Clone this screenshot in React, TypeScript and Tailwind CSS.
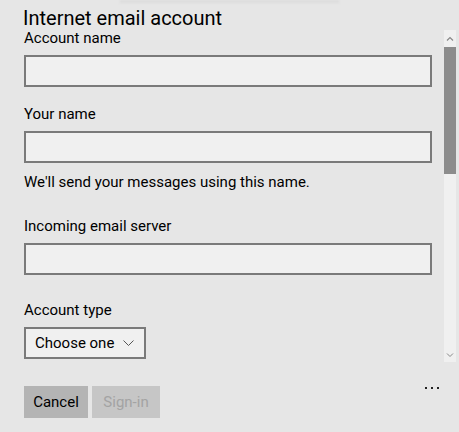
function Field({ label, hint, top }: { label: string; hint?: string; top: string }) {
  return (
    <div className={`flex flex-col ${top}`}>
      <label className="text-[15px] leading-[20px]">{label}</label>
      <div className="mt-[7px] h-[32px] w-[408px] border-2 border-[#7a7a7a] bg-[#f0f0f0]" />
      {hint && <p className="mt-[9px] text-[15px] leading-[20px]">{hint}</p>}
    </div>
  )
}

export default function App() {
  return (
    <div className="relative h-[432px] w-[459px] overflow-hidden bg-[#e6e6e6] text-black [font-family:Roboto,sans-serif]">
      <div className="mx-[120px] h-[3px] bg-[#dcdcdc] blur-[1px]" />
      <h1 className="pl-[23px] pt-[3px] text-[20px] leading-[24px]">Internet email account</h1>

      <div className="flex h-[334px] -mt-[2px]">
        <div className="flex w-[432px] flex-col pl-[24px]">
          <Field label="Account name" top="mt-0" />
          <Field label="Your name" hint="We'll send your messages using this name." top="mt-[17px]" />
          <Field label="Incoming email server" top="mt-[24px]" />

          <div className="mt-[25px] flex flex-col">
            <label className="text-[15px] leading-[20px]">Account type</label>
            <button className="mt-[7px] flex h-[32px] w-[122px] items-center justify-between border-2 border-[#7a7a7a] bg-[#f0f0f0] pl-[9px] pr-[10px] text-[15px]">
              <span>Choose one</span>
              <svg width="11" height="6" viewBox="0 0 11 6" fill="none" stroke="#555" strokeWidth="1">
                <path d="M0.5 0.5 L5.5 5.5 L10.5 0.5" />
              </svg>
            </button>
          </div>
        </div>

        <div className="ml-[12px] mt-[2px] flex w-[12px] flex-col bg-[#f0f0f0]">
          <div className="flex h-[17px] items-center justify-center">
            <svg width="8" height="5" viewBox="0 0 8 5" fill="none" stroke="#888" strokeWidth="1.2">
              <path d="M1 4.5 L4 1.5 L7 4.5" />
            </svg>
          </div>
          <div className="h-[127px] bg-[#8c8c8c]" />
          <div className="flex-1" />
          <div className="flex h-[14px] items-center justify-center">
            <svg width="8" height="5" viewBox="0 0 8 5" fill="none" stroke="#888" strokeWidth="1">
              <path d="M1 0.5 L4 3.5 L7 0.5" />
            </svg>
          </div>
        </div>
      </div>

      <div className="mt-[24px] flex items-start pl-[24px] pr-[20px]">
        <button className="h-[32px] w-[64px] bg-[#b4b4b4] text-[15px]">Cancel</button>
        <button className="ml-[4px] h-[32px] w-[68px] bg-[#c6c6c6] text-[15px] text-[#a3a3a3]">Sign-in</button>
        <div className="ml-auto mt-[1px] flex gap-[4px]">
          <span className="h-[2px] w-[2px] bg-[#222]" />
          <span className="h-[2px] w-[2px] bg-[#222]" />
          <span className="h-[2px] w-[2px] bg-[#222]" />
        </div>
      </div>
    </div>
  )
}
